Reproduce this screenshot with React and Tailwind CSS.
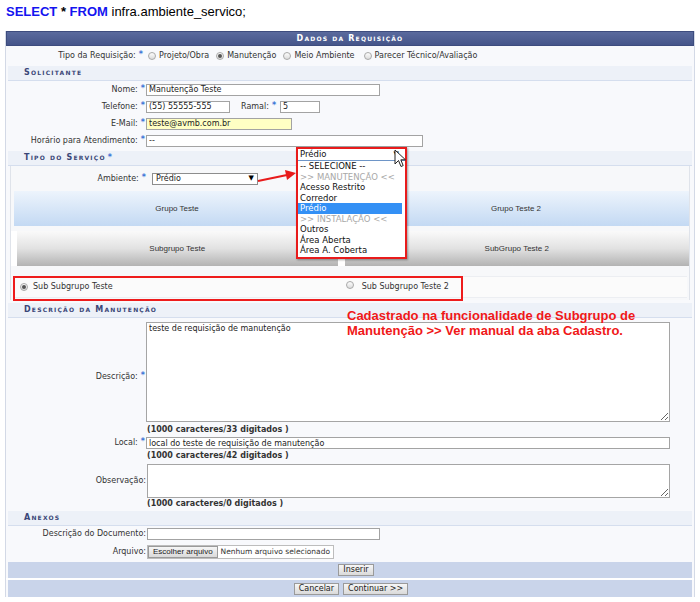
import React from "react";

const Star = () => (
  <span className="text-[#3a74d6] font-bold text-[8px] ml-[3px] mr-[1px] relative top-[-1px]">*</span>
);

const Radio = ({ on }) => (
  <span className="inline-flex items-center justify-center w-[8px] h-[8px] rounded-full border border-[#a9a9a9] bg-linear-to-b from-[#fdfdfd] to-[#dcdcdc] shrink-0">
    {on && <span className="w-[4px] h-[4px] rounded-full bg-[#555]" />}
  </span>
);

const Sub = ({ children }) => (
  <div className="h-[15px] mx-[2px] bg-[#edf1f8] border-b border-[#d5deee] flex items-center pl-[16px] text-[#3a4677] font-bold text-[8px] tracking-[1.2px] [font-variant:small-caps]">
    {children}
  </div>
);

const Label = ({ children, star, cls = "" }) => (
  <div className={"w-[140px] shrink-0 text-right text-[#333] " + cls}>
    {children}
    {star && <Star />}
  </div>
);

const Inp = ({ value = "", cls = "", bg = "bg-white" }) => (
  <input
    readOnly
    value={value}
    className={"h-[12px] border border-[#a3a3a3] px-[2px] text-[8px] leading-[10px] text-[#222] outline-none " + bg + " " + cls}
  />
);

const Btn = ({ children, cls = "" }) => (
  <span className={"inline-flex items-center justify-center h-[12px] border border-[#9a9a9a] bg-linear-to-b from-[#f6f6f6] to-[#dadada] text-[8px] text-[#222] " + cls}>
    {children}
  </span>
);

export default function App() {
  return (
    <div className="relative w-[700px] h-[602px] bg-white overflow-hidden font-['DejaVu_Sans',sans-serif] text-[8px]">
      <div className="h-[31px] pl-[6px] pt-[4px] font-['Liberation_Sans',Arial,sans-serif] text-[13px] leading-[16px] text-black">
        <span className="font-bold text-[#1414f0]">SELECT</span> <span className="font-bold">*</span>{" "}
        <span className="font-bold text-[#1414f0]">FROM</span> infra.ambiente_servico;
      </div>

      <div className="ml-[5px] w-[690px] border-x border-[#d3d9e6] bg-[#f8f9fc]">
        {/* header */}
        <div className="h-[15px] bg-linear-to-b from-[#5a6a9d] to-[#45558a] border border-[#3d4c7e] flex items-center justify-center text-white font-bold text-[8px] tracking-[1.2px] [font-variant:small-caps]">
          Dados da Requisição
        </div>

        {/* tipo requisicao */}
        <div className="h-[20px] flex items-center text-[#333]">
          <div className="w-[138px] shrink-0 text-right">
            Tipo da Requisição:<Star />
          </div>
          <div className="flex items-center ml-[4px]">
            <Radio /> <span className="ml-[3px] mr-[7px]">Projeto/Obra</span>
            <Radio on /> <span className="ml-[3px] mr-[7px]">Manutenção</span>
            <Radio /> <span className="ml-[3px] mr-[9px]">Meio Ambiente</span>
            <Radio /> <span className="ml-[3px]">Parecer Técnico/Avaliação</span>
          </div>
        </div>

        <Sub>Solicitante</Sub>

        <div className="h-[17px] flex items-center">
          <Label star>Nome:</Label>
          <Inp value="Manutenção Teste" cls="w-[234px]" />
        </div>
        <div className="h-[17px] flex items-center">
          <Label star>Telefone:</Label>
          <Inp value="(55) 55555-555" cls="w-[84px]" />
          <span className="ml-[11px] text-[#333]">Ramal:</span>
          <Star />
          <Inp value="5" cls="w-[40px] ml-[3px]" />
        </div>
        <div className="h-[17px] flex items-center">
          <Label star>E-Mail:</Label>
          <Inp value="teste@avmb.com.br" cls="w-[146px]" bg="bg-[#ffffc4]" />
        </div>
        <div className="h-[17px] flex items-center">
          <Label star>Horário para Atendimento:</Label>
          <Inp value="--" cls="w-[277px]" />
        </div>

        <div className="h-[2px]" />
        <Sub>
          Tipo do Serviço <span className="text-[#3a74d6] ml-[2px]">*</span>
        </Sub>

        {/* servico area */}
        <div className="mx-[4px] border-x border-[#dfe3ea] bg-[#f7f8fa] pb-[2px]">
          <div className="h-[25px] flex items-center">
            <div className="w-[136px] text-right text-[#333]">
              Ambiente:<Star />
            </div>
            <div className="ml-[5px] w-[106px] h-[12px] border border-[#8d8d8d] bg-white flex items-center justify-between px-[3px] text-[#222]">
              <span>Prédio</span>
              <span className="text-[7px] text-black">▼</span>
            </div>
          </div>
          <div className="flex">
            <div className="ml-[3px] w-[327px] h-[35px] bg-linear-to-b from-[#edf4fc] to-[#c3d9f3] flex items-center justify-center font-['Liberation_Sans',sans-serif] text-[8px] text-[#333]">
              Grupo Teste
            </div>
            <div className="ml-[3px] w-[347px] h-[35px] bg-linear-to-b from-[#edf4fc] to-[#c3d9f3] flex items-center justify-center font-['Liberation_Sans',sans-serif] text-[8px] text-[#333]">
              Grupo Teste 2
            </div>
          </div>
          <div className="flex mt-[5px] bg-white">
            <div className="ml-[6px] w-[321px] h-[35px] bg-linear-to-b from-[#fafafa] via-[#e2e2e2] to-[#b3b3b3] flex items-center justify-center font-['Liberation_Sans',sans-serif] text-[8px] text-[#333]">
              Subgrupo Teste
            </div>
            <div className="ml-[7px] w-[345px] h-[35px] bg-linear-to-b from-[#fafafa] via-[#e2e2e2] to-[#b3b3b3] flex items-center justify-center font-['Liberation_Sans',sans-serif] text-[8px] text-[#333]">
              SubGrupo Teste 2
            </div>
          </div>
          <div className="mt-[10px] ml-[3px] mr-[2px] h-[22px] flex items-center bg-[#fbfbfb] border-y border-[#eceef2] text-[#333]">
            <span className="ml-[6px]"><Radio on /></span>
            <span className="ml-[5px]">Sub Subgrupo Teste</span>
            <span className="ml-[233px]"><Radio /></span>
            <span className="ml-[8px]">Sub Subgrupo Teste 2</span>
          </div>
        </div>

        <div className="h-[3px]" />
        <Sub>Descrição da Manutenção</Sub>

        <div className="flex items-center mt-[4px]">
          <Label star cls="relative top-[5px]">Descrição:</Label>
          <textarea
            readOnly
            value="teste de requisição de manutenção"
            className="block w-[524px] h-[100px] border border-[#a5a5a5] bg-white px-[2px] py-[1px] text-[8px] leading-[10px] text-[#222] outline-none"
          />
        </div>
        <div className="h-[15px] flex items-center pl-[141px] font-bold text-[#333]">(1000 caracteres/33 digitados )</div>
        <div className="h-[12px] flex items-center">
          <Label star>Local:</Label>
          <Inp value="local do teste de requisição de manutenção" cls="w-[524px]" />
        </div>
        <div className="h-[14px] flex items-center pl-[141px] font-bold text-[#333]">(1000 caracteres/42 digitados )</div>
        <div className="flex items-center mt-[1px]">
          <Label>Observação:</Label>
          <textarea
            readOnly
            value=""
            className="block ml-[1px] w-[523px] h-[34px] border border-[#a5a5a5] bg-white text-[8px] outline-none"
          />
        </div>
        <div className="h-[11px] flex items-center pl-[141px] font-bold text-[#333]">(1000 caracteres/0 digitados )</div>

        <div className="h-[2px]" />
        <Sub>Anexos</Sub>

        <div className="h-[16px] flex items-center">
          <Label>Descrição do Documento:</Label>
          <Inp cls="w-[233px] ml-[1px]" />
        </div>
        <div className="h-[20px] flex items-center">
          <Label>Arquivo:</Label>
          <div className="ml-[1px] flex items-center h-[14px] bg-white border border-[#bdbdbd]">
            <Btn cls="px-[4px] font-['Liberation_Sans',sans-serif]">Escolher arquivo</Btn>
            <span className="px-[3px] text-[#333] text-[7.5px]">Nenhum arquivo selecionado</span>
          </div>
        </div>

        <div className="mx-[2px] h-[16px] bg-[#c9d4ea] flex items-center justify-center">
          <Btn cls="px-[4px] ml-[12px]">Inserir</Btn>
        </div>
        <div className="h-[2px] bg-white" />
        <div className="mx-[2px] h-[17px] bg-[#c9d4ea] flex items-center justify-center gap-[4px]">
          <Btn cls="px-[4px] ml-[2px]">Cancelar</Btn>
          <Btn cls="px-[4px]">Continuar &gt;&gt;</Btn>
        </div>
      </div>

      {/* annotation: red box around sub subgrupo */}
      <div className="absolute left-[13px] top-[276px] w-[450px] h-[25px] border-2 border-[#ee1c1c]" />

      {/* annotation text */}
      <div className="absolute left-[347px] top-[308px] font-['Liberation_Sans',Arial,sans-serif] font-bold text-[13px] leading-[15px] text-[#f01818]">
        Cadastrado na funcionalidade de Subgrupo de
        <br />
        Manutenção &gt;&gt; Ver manual da aba Cadastro.
      </div>

      {/* red arrow */}
      <svg className="absolute left-[255px] top-[166px]" width="45" height="22" viewBox="0 0 45 22">
        <line x1="3" y1="15" x2="32" y2="9" stroke="#e81b1b" strokeWidth="2.2" />
        <polygon points="41,7 30,4 32,14" fill="#e81b1b" />
      </svg>

      {/* dropdown open */}
      <div className="absolute left-[296px] top-[147px] w-[111px] h-[112px] border-2 border-[#e81b1b] bg-white shadow-[1px_1px_2px_rgba(0,0,0,0.35)] font-['DejaVu_Sans',sans-serif] text-[8.5px] text-[#111]">
        <div className="h-[12px] border-b border-[#6e95c7] flex items-center justify-between pl-[2px] pr-[6px]">
          <span>Prédio</span>
          <span className="text-[7px]">▼</span>
        </div>
        <div className="pl-[2px] h-[10.5px] leading-[10.5px]">-- SELECIONE --</div>
        <div className="pl-[2px] h-[10.5px] leading-[10.5px] text-[#a8a8a8]">&gt;&gt; MANUTENÇÃO &lt;&lt;</div>
        <div className="pl-[2px] h-[10.5px] leading-[10.5px]">Acesso Restrito</div>
        <div className="pl-[2px] h-[10.5px] leading-[10.5px]">Corredor</div>
        <div className="pl-[2px] h-[10.5px] leading-[10.5px] bg-[#3390f5] text-white mr-[3px]">Prédio</div>
        <div className="pl-[2px] h-[10.5px] leading-[10.5px] text-[#a8a8a8]">&gt;&gt; INSTALAÇÃO &lt;&lt;</div>
        <div className="pl-[2px] h-[10.5px] leading-[10.5px]">Outros</div>
        <div className="pl-[2px] h-[10.5px] leading-[10.5px]">Área Aberta</div>
        <div className="pl-[2px] h-[10.5px] leading-[10.5px]">Área A. Coberta</div>
      </div>

      {/* mouse cursor */}
      <svg className="absolute left-[394px] top-[149px]" width="13" height="19" viewBox="0 0 13 19">
        <path d="M1 1 L1 15 L4.5 11.5 L7 17.5 L9.2 16.6 L6.8 10.8 L11.5 10.8 Z" fill="white" stroke="#222" strokeWidth="1" strokeLinejoin="round" />
      </svg>
    </div>
  );
}
